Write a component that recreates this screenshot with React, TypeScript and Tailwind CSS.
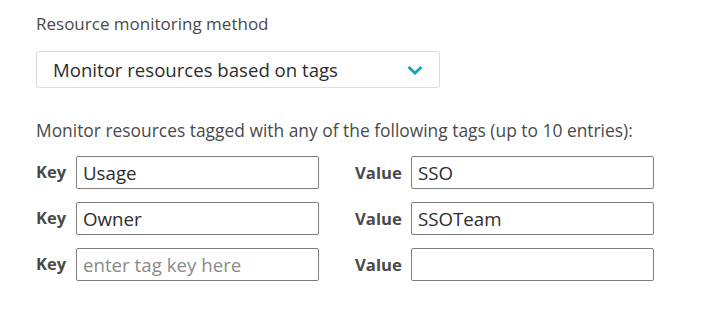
import React from "react";

const rows = [
  { key: "Usage", value: "SSO" },
  { key: "Owner", value: "SSOTeam" },
  { key: "", value: "" },
];

export default function App() {
  return (
    <div
      className="h-[334px] w-[702px] bg-white pl-9 pt-[12px] text-[#4a4a4a]"
      style={{ fontFamily: '"Open Sans", sans-serif' }}
    >
      <div className="text-[17px] leading-[23px]">Resource monitoring method</div>
      <div className="mt-[16px] flex h-[37px] w-[404px] items-center justify-between rounded-[3px] border border-[#dcdcdc] pl-4 pr-4 text-[18.6px] text-[#2c2d2d]">
        <span>Monitor resources based on tags</span>
        <svg width="16" height="12" viewBox="0 0 16 12" fill="none">
          <path d="M1.5 3l6.5 6 6.5-6" stroke="#14a3b5" strokeWidth="2.8" />
        </svg>
      </div>
      <div className="mt-[31px] text-[17.4px] leading-[22px]">
        Monitor resources tagged with any of the following tags (up to 10 entries):
      </div>
      <div className="mt-[15px] flex flex-col gap-[13px]">
        {rows.map((r, i) => (
          <div key={i} className="flex items-center">
            <span className="w-[40px] text-[16.5px] font-bold">Key</span>
            <input
              className="h-[33px] w-[243px] rounded-[2px] border border-[#7e7e7e] px-[6px] text-[18.7px] text-[#2c2d2d] outline-none placeholder:text-[#8a8a8a]"
              defaultValue={r.key}
              placeholder={i === 2 ? "enter tag key here" : ""}
            />
            <span className="ml-[36px] w-[56px] text-[16.7px] font-bold">Value</span>
            <input
              className="h-[33px] w-[243px] rounded-[2px] border border-[#7e7e7e] px-[6px] text-[18.7px] text-[#2c2d2d] outline-none"
              defaultValue={r.value}
            />
          </div>
        ))}
      </div>
    </div>
  );
}
